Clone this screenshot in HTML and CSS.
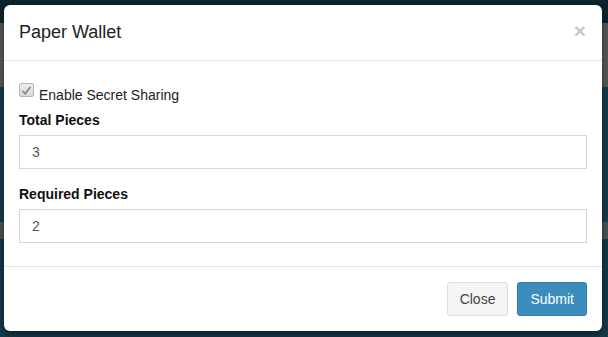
FILE: index.html
```html
<!DOCTYPE html>
<html lang="en">
<head>
    <meta charset="UTF-8">
    <meta name="viewport" content="width=device-width, initial-scale=1.0">
    <title>Paper Wallet</title>
    <link rel="stylesheet" href="styles.css">
</head>
<body>
    <div class="page">
        <div class="topbar"></div>
        <div class="band"></div>
        <div class="content"></div>
        <div class="band low"></div>
    </div>

    <div class="modal">
        <div class="modal-header">
            <h4 class="modal-title">Paper Wallet</h4>
            <span class="close">&times;</span>
        </div>
        <div class="modal-body">
            <label class="check">
                <span class="box">
                    <svg width="11" height="11" viewBox="0 0 11 11">
                        <path d="M1.5 5.8 L4.2 8.6 L9.6 1.8" fill="none" stroke="#8c8c8c" stroke-width="1.8"/>
                    </svg>
                </span>Enable Secret Sharing
            </label>
            <div class="form-group">
                <label class="title">Total Pieces</label>
                <input class="form-control" type="text" value="3">
            </div>
            <div class="form-group last">
                <label class="title">Required Pieces</label>
                <input class="form-control" type="text" value="2">
            </div>
        </div>
        <div class="modal-footer">
            <button class="btn btn-default">Close</button>
            <button class="btn btn-primary">Submit</button>
        </div>
    </div>
</body>
</html>
```

FILE: styles.css
```css
body {
    margin: 0;
    background-color: #163a4a;
    font-family: "Liberation Sans", Arial, sans-serif;
    font-size: 14px;
    color: #333;
    overflow: hidden;
}
.page {
    height: 337px;
}
.topbar {
    height: 23px;
    background-color: #0b2430;
}
.band {
    height: 64px;
    background-color: #5a5a5a;
}
.content {
    height: 135px;
    background-color: #183d4e;
}
.band.low {
    height: 17px;
    background-color: #4e5558;
}

.modal {
    position: absolute;
    top: 5px;
    left: 4px;
    width: 598px;
    background-color: #fff;
    border-radius: 6px;
    box-shadow: 0 3px 9px rgba(0, 0, 0, 0.5);
}
.modal-header {
    display: flex;
    justify-content: space-between;
    align-items: flex-start;
    padding: 15px;
    border-bottom: 1px solid #e5e5e5;
}
.modal-title {
    margin: 0;
    font-size: 18px;
    font-weight: normal;
    line-height: 25px;
    color: #222;
}
.close {
    font-size: 21px;
    font-weight: bold;
    line-height: 1;
    color: #c8c8c8;
    margin-top: 0px;
    margin-right: 1px;
}
.modal-body {
    padding: 15px;
    padding-top: 22px;
}
.check {
    display: block;
    line-height: 20px;
    color: #222;
    margin-bottom: 5px;
}
.box {
    display: inline-block;
    box-sizing: border-box;
    width: 15px;
    height: 14px;
    margin-right: 5px;
    vertical-align: 3px;
    border: 1px solid #b5b5b5;
    border-radius: 2px;
    background: linear-gradient(#ececec, #d9d9d9);
    position: relative;
}
.box svg {
    position: absolute;
    top: 1px;
    left: 1px;
}
.form-group {
    margin-bottom: 15px;
}
.form-group.last {
    margin-bottom: 8px;
}
.title {
    display: block;
    font-weight: bold;
    line-height: 20px;
    margin-bottom: 5px;
    color: #111;
}
.form-control {
    display: block;
    box-sizing: border-box;
    width: 100%;
    height: 34px;
    margin: 0;
    padding: 6px 12px;
    font-family: "Liberation Sans", Arial, sans-serif;
    font-size: 14px;
    color: #555;
    border: 1px solid #d2d6de;
    border-radius: 0;
    outline: none;
}
.modal-footer {
    display: flex;
    justify-content: flex-end;
    gap: 9px;
    padding: 15px;
    border-top: 1px solid #e5e5e5;
}
.btn {
    height: 34px;
    padding: 6px 12px;
    font-family: "Liberation Sans", Arial, sans-serif;
    font-size: 14px;
    line-height: 20px;
    border-radius: 3px;
    border: 1px solid transparent;
    cursor: pointer;
}
.btn-default {
    background-color: #f4f4f4;
    border-color: #ddd;
    color: #444;
}
.btn-primary {
    background-color: #3c8dbc;
    border-color: #367fa9;
    color: #fff;
}
```
